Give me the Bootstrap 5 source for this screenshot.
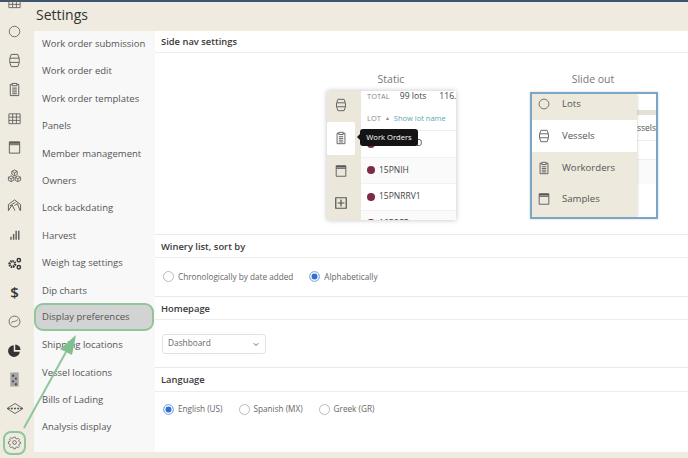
<!DOCTYPE html>
<html lang="en">
<head>
<meta charset="utf-8">
<title>Settings</title>
<link href="https://cdn.jsdelivr.net/npm/bootstrap@5.3.0/dist/css/bootstrap.min.css" rel="stylesheet">
<style>
html,body{height:458px;overflow:hidden}
body{font-family:"Open Sans","Liberation Sans",sans-serif;background:#efebe0;color:#555;font-size:9px;position:relative}
.topline{height:2px;background:#3d5570}
.shell{height:456px}
.rail{width:29px;flex:none;margin-top:-14px}
.rail-i{height:29px;flex:none;color:#5a5a5a}
.rail-i svg{width:15px;height:15px}
.rail-gap{margin-top:5px}
.rail-wide svg{width:18px;height:15px}
.dollar{font:600 15px "Open Sans",sans-serif;color:#333;line-height:1}
.main-col{padding-left:5px}
.title{font-size:14px;color:#333;height:29px;line-height:26px;padding-left:2px;margin-left:0}
.panel{height:421px;background:#fff;border-top-left-radius:3px;margin-left:0}
.sublist{width:121px;background:#f8f8f8;flex:none}
.sub-i{height:27.4px;line-height:26px;padding-left:8px;font-size:9.5px;color:#555;white-space:nowrap}
.sub-on{background:#d3d3d3;border:2px solid #8fc79a;border-radius:9px;padding-left:6px;line-height:23px;height:28px;margin-top:-1.6px;margin-bottom:1px;margin-right:1px}
.content{min-width:0}
.sec-h{font-size:9.4px;font-weight:600;color:#3a3a3a;height:23px;line-height:23px;padding-left:6px;border-bottom:1px solid #ececec}
.sec-first{height:22px;line-height:21px}
.sec-lang{height:24px}
.sec-b{border-bottom:1px solid #e9e9e9;padding-left:8px}
.s1{height:182px;position:relative}
.s2{height:39px}
.s3{height:48px}
.s4{height:43px;padding:11px 0 0 8px}
.opt{font-size:8.2px;color:#666;gap:4px}
.radio-o{width:11px;height:11px;border-radius:50%;border:1px solid #bbb;background:#fff;flex:none}
.radio-on{border:1.5px solid #9dbce8;background:#2f6fd6;box-shadow:inset 0 0 0 1.5px #fff}
.sel{width:104px;height:20px;margin-left:-1px;border:1px solid #e2e2e2;border-radius:3px;font-size:8.3px;color:#666;padding:0 6px 0 5px}
.sel svg{width:6px;height:6px}
.pv-t{font-size:10.5px;color:#777;position:absolute;top:19px;transform:translateX(-50%)}
.pv-t1{left:236px}
.pv-t2{left:438px}
.pv{position:absolute;overflow:hidden;background:#fff}
.pv-s{left:172px;top:38px;width:129px;height:129px;box-shadow:0 0 5px rgba(0,0,0,.25)}
.pv-r{width:34px;background:#ebe7db;flex:none}
.pv-ri{height:32.5px;width:28px;flex:none;color:#555}
.pv-ri svg{width:14px;height:14px}
.pv-ri-first{height:31px;padding-bottom:3px}
.pv-on{background:#fff;border-radius:2px}
.pv-top{font-size:8.6px;color:#444;padding:0 0 0 6px;white-space:nowrap}
.pv-tot{height:13px;line-height:11px}
.pv-lbl{font-size:7.5px;color:#888;margin-right:10px}
.pv-num{margin-right:13px}
.pv-lot{height:27px;font-size:7.5px;color:#888;border-bottom:1px solid #eee;padding-top:4px}
.pv-tri{font-size:5px;margin:0 4px}
.pv-lnk{color:#5ea6b8}
.pv-row{height:26.5px;font-size:8.5px;color:#444;padding-left:6px;border-bottom:1px solid #f2f2f2;white-space:nowrap;flex:none}
.pv-grey{background:#fafafa}
.dot{width:8px;height:8px;border-radius:50%;background:#7d2a45;margin-right:4px;flex:none}
.tip{position:absolute;left:33px;top:38px;height:17px;width:58px;background:#141414;color:#fff;font-size:7.6px;line-height:17px;text-align:center;border-radius:3px}
.tip::before{content:"";position:absolute;left:-3px;top:5px;border:3.5px solid transparent;border-left:0;border-right-color:#141414}
.pv-o{left:375px;top:39px;width:128px;height:127px;border:2px solid #7ba6c8;box-shadow:0 0 2px rgba(0,0,0,.2)}
.so-m{position:absolute;left:0;top:0;width:105px;height:123px;background:#ede9dd;box-shadow:1px 0 2px rgba(0,0,0,.12)}
.so-i{height:31.6px;font-size:9.6px;color:#555;padding-left:5px;flex:none}
.so-i svg{width:14px;height:14px;margin-right:11px;flex:none}
.so-first{height:26px;padding-bottom:6px}
.so-on{background:#fff;height:32px}
.so-bg{position:absolute;left:105px;top:0;right:0;bottom:0;font-size:8.5px;color:#555}
.so-band{height:21px;border-bottom:5px solid #e4e2d6}
.so-ssels{height:26px;line-height:25px;border-bottom:1px solid #eee;padding-right:1px}
.so-r3{height:19px;border-bottom:1px solid #eee}
.so-r4{height:24px;background:#fafafa}
.mark-ln{position:absolute;left:0;top:0;pointer-events:none}
.gear-ring{position:absolute;left:3px;top:431px;width:23px;height:24px;border:2px solid #8fc79a;border-radius:8px}
</style>
</head>
<body>
<svg width="0" height="0" class="d-block position-absolute">
<defs>
<symbol id="i-circle" viewBox="0 0 16 16"><circle cx="8" cy="8" r="5.6" fill="none" stroke="currentColor" stroke-width=".9"/></symbol>
<symbol id="i-barrel" viewBox="0 0 16 16"><path d="M4.500 1.500h7q1.700 3.500 1.700 6.500t-1.700 6.500h-7Q2.800 11 2.800 8t1.700-6.500zM3.200 5.500h9.600M3.200 10h9.600" fill="none" stroke="currentColor" stroke-width="1"/></symbol>
<symbol id="i-clip" viewBox="0 0 16 16"><path d="M5.500 2.500H3.500v12h9v-12h-2M5.500 1.500h5v2.500h-5zM5.500 6.500h5M5.500 8.500h5M5.500 10.500h5M5.500 12.500h5" fill="none" stroke="currentColor" stroke-width="1"/></symbol>
<symbol id="i-grid" viewBox="0 0 16 16"><path d="M2 3h12v10.500H2zM2 6.500h12M2 10h12M6 3v10.500M10 3v10.500" fill="none" stroke="currentColor" stroke-width=".9"/></symbol>
<symbol id="i-box" viewBox="0 0 16 16"><path d="M2.500 2h11v12h-11zM2.500 5h11" fill="none" stroke="currentColor" stroke-width="1"/><path d="M2.500 2h11v2h-11z" fill="currentColor"/></symbol>
<symbol id="i-cubes" viewBox="0 0 16 16"><path d="M8 1l2.900 1.500v3.200L8 7.200 5.100 5.700V2.500zM4.400 7.300l2.900 1.500V12l-2.900 1.500L1.500 12V8.800zM11.600 7.300l2.900 1.500V12l-2.900 1.500L8.700 12V8.800zM5.100 2.500L8 4l2.900-1.500M8 4v3M1.500 8.800l2.900 1.500 2.900-1.500M4.400 10.300v3M8.700 8.800l2.900 1.500 2.900-1.500M11.600 10.300v3" fill="none" stroke="currentColor" stroke-width=".9"/></symbol>
<symbol id="i-barn" viewBox="0 0 16 16"><path d="M1.500 13.500V7L8 2l6.500 5v6.500M1.500 13.500l4-6 3 6M8 8l3-2 3 7.500M3 8.500l6-4" fill="none" stroke="currentColor" stroke-width="1"/></symbol>
<symbol id="i-bars" viewBox="0 0 16 16"><path d="M3.500 10.500h1.500v3H3.500zM6.300 7.500h1.500v6H6.300zM9 4h1.500v9.500H9zM11.800 4h1.500v9.500h-1.500z" fill="currentColor"/></symbol>
<symbol id="i-gears" viewBox="0 0 16 16"><circle cx="5.700" cy="8.500" r="3" fill="none" stroke="#333" stroke-width="2.600" stroke-dasharray="1.600 .7"/><circle cx="12.600" cy="4.500" r="1.800" fill="none" stroke="#333" stroke-width="1.500"/><circle cx="12.600" cy="12" r="1.800" fill="none" stroke="#333" stroke-width="1.500"/></symbol>
<symbol id="i-gauge" viewBox="0 0 16 16"><circle cx="8" cy="8" r="5.800" fill="none" stroke="currentColor" stroke-width=".9"/><path d="M4.500 10C6 6.500 8 9.500 11.500 6" fill="none" stroke="currentColor" stroke-width=".9"/></symbol>
<symbol id="i-pie" viewBox="0 0 16 16"><path d="M7.200 2.300a6.300 6.300 0 1 0 6.500 7H7.200z" fill="#333"/><path d="M8.800 1.500a6 6 0 0 1 5.700 6H8.800z" fill="#333"/></symbol>
<symbol id="i-card" viewBox="0 0 16 16"><path d="M3.500 .5h9v15h-9z" fill="#a5a5a5"/><path d="M5.500 3h2v2h-2zM8.500 6h2v2h-2zM5.500 9h2v2h-2zM8.500 12h2v2h-2z" fill="#444"/></symbol>
<symbol id="i-diamond" viewBox="0 0 18 15"><path d="M9 2.500L17 7.500 9 12.500 1 7.500zM1 7.500h3M14 7.500h3" fill="none" stroke="currentColor" stroke-width=".9"/><path d="M4.500 7.500l1.300-1.200 1.300 1.200-1.300 1.200zM7.700 7.500L9 6.300l1.300 1.200L9 8.700zM10.900 7.500l1.300-1.200 1.300 1.200-1.300 1.200z" fill="currentColor"/></symbol>
<symbol id="i-gear" viewBox="0 0 16 16"><circle cx="8" cy="8" r="2" fill="none" stroke="currentColor" stroke-width=".9"/><path d="M7 2.300h2l.4 1.500 1.200.5 1.300-.8 1.400 1.400-.8 1.300.5 1.200 1.500.4v1.400l-1.500.4-.5 1.200.8 1.300-1.400 1.400-1.300-.8-1.200.5-.4 1.500H7l-.4-1.500-1.200-.5-1.300.8-1.400-1.400.8-1.300-.5-1.200-1.500-.4V7.200l1.500-.4.500-1.200-.8-1.300 1.400-1.400 1.300.8 1.200-.5z" fill="none" stroke="currentColor" stroke-width=".8"/></symbol>
<symbol id="i-plus" viewBox="0 0 16 16"><path d="M2 2h12v12H2zM8 4v8M4 8h8" fill="none" stroke="currentColor" stroke-width="1.400"/></symbol>
</defs>
</svg>
<div class="topline"></div>
<div class="shell d-flex">
  <nav class="rail d-flex flex-column align-items-center">
    <div class="rail-i d-flex align-items-center justify-content-center"><svg><use href="#i-grid"/></svg></div>
    <div class="rail-i d-flex align-items-center justify-content-center"><svg><use href="#i-circle"/></svg></div>
    <div class="rail-i d-flex align-items-center justify-content-center"><svg><use href="#i-barrel"/></svg></div>
    <div class="rail-i d-flex align-items-center justify-content-center"><svg><use href="#i-clip"/></svg></div>
    <div class="rail-i d-flex align-items-center justify-content-center"><svg><use href="#i-grid"/></svg></div>
    <div class="rail-i d-flex align-items-center justify-content-center"><svg><use href="#i-box"/></svg></div>
    <div class="rail-i d-flex align-items-center justify-content-center"><svg><use href="#i-cubes"/></svg></div>
    <div class="rail-i d-flex align-items-center justify-content-center"><svg><use href="#i-barn"/></svg></div>
    <div class="rail-i d-flex align-items-center justify-content-center"><svg><use href="#i-bars"/></svg></div>
    <div class="rail-i d-flex align-items-center justify-content-center"><svg><use href="#i-gears"/></svg></div>
    <div class="rail-i d-flex align-items-center justify-content-center"><span class="dollar">$</span></div>
    <div class="rail-i d-flex align-items-center justify-content-center"><svg><use href="#i-gauge"/></svg></div>
    <div class="rail-i d-flex align-items-center justify-content-center"><svg><use href="#i-pie"/></svg></div>
    <div class="rail-i d-flex align-items-center justify-content-center"><svg><use href="#i-card"/></svg></div>
    <div class="rail-i rail-wide d-flex align-items-center justify-content-center"><svg><use href="#i-diamond"/></svg></div>
    <div class="rail-i rail-gap d-flex align-items-center justify-content-center"><svg><use href="#i-gear"/></svg></div>
  </nav>
  <div class="main-col flex-grow-1">
    <div class="title">Settings</div>
    <div class="panel d-flex">
      <div class="sublist">
        <div class="sub-i">Work order submission</div>
        <div class="sub-i">Work order edit</div>
        <div class="sub-i">Work order templates</div>
        <div class="sub-i">Panels</div>
        <div class="sub-i">Member management</div>
        <div class="sub-i">Owners</div>
        <div class="sub-i">Lock backdating</div>
        <div class="sub-i">Harvest</div>
        <div class="sub-i">Weigh tag settings</div>
        <div class="sub-i">Dip charts</div>
        <div class="sub-i sub-on">Display preferences</div>
        <div class="sub-i">Shipping locations</div>
        <div class="sub-i">Vessel locations</div>
        <div class="sub-i">Bills of Lading</div>
        <div class="sub-i">Analysis display</div>
      </div>
      <div class="content flex-grow-1">
        <div class="sec-h sec-first">Side nav settings</div>
        <div class="sec-b s1">
          <div class="pv-t pv-t1">Static</div>
          <div class="pv pv-s d-flex">
            <div class="pv-r d-flex flex-column">
              <div class="pv-ri pv-ri-first d-flex align-items-center justify-content-center"><svg><use href="#i-barrel"/></svg></div>
              <div class="pv-ri pv-on d-flex align-items-center justify-content-center"><svg><use href="#i-clip"/></svg></div>
              <div class="pv-ri d-flex align-items-center justify-content-center"><svg><use href="#i-box"/></svg></div>
              <div class="pv-ri d-flex align-items-center justify-content-center"><svg><use href="#i-plus"/></svg></div>
            </div>
            <div class="flex-grow-1 overflow-hidden">
              <div class="pv-top pv-tot d-flex align-items-start"><span class="pv-lbl">TOTAL</span><span class="pv-num">99 lots</span><span>116.</span></div>
              <div class="pv-top pv-lot d-flex align-items-center">LOT <span class="pv-tri">▲</span> <span class="pv-lnk">Show lot name</span></div>
              <div class="pv-row d-flex align-items-center"><span class="dot"></span>15PCHARD</div>
              <div class="pv-row pv-grey d-flex align-items-center"><span class="dot"></span>15PNIH</div>
              <div class="pv-row d-flex align-items-center"><span class="dot"></span>15PNRRV1</div>
              <div class="pv-row pv-grey d-flex align-items-center"><span class="dot"></span>16PSCF</div>
            </div>
            <div class="tip">Work Orders</div>
          </div>
          <div class="pv-t pv-t2">Slide out</div>
          <div class="pv pv-o">
            <div class="so-bg">
              <div class="so-band"></div>
              <div class="so-ssels text-end">ssels</div>
              <div class="so-r3"></div>
              <div class="so-r4"></div>
            </div>
            <div class="so-m d-flex flex-column">
              <div class="so-i so-first d-flex align-items-center"><svg><use href="#i-circle"/></svg>Lots</div>
              <div class="so-i so-on d-flex align-items-center"><svg><use href="#i-barrel"/></svg>Vessels</div>
              <div class="so-i d-flex align-items-center"><svg><use href="#i-clip"/></svg>Workorders</div>
              <div class="so-i d-flex align-items-center"><svg><use href="#i-box"/></svg>Samples</div>
            </div>
          </div>
        </div>
        <div class="sec-h">Winery list, sort by</div>
        <div class="sec-b s2 d-flex align-items-center gap-3">
          <div class="opt d-flex align-items-center"><span class="radio-o"></span>Chronologically by date added</div>
          <div class="opt d-flex align-items-center"><span class="radio-o radio-on"></span>Alphabetically</div>
        </div>
        <div class="sec-h">Homepage</div>
        <div class="sec-b s3 d-flex align-items-center">
          <div class="sel d-flex align-items-center justify-content-between">Dashboard<svg viewBox="0 0 8 8"><path d="M1 3l3 3 3-3" fill="none" stroke="#555" stroke-width="1.200"/></svg></div>
        </div>
        <div class="sec-h sec-lang">Language</div>
        <div class="s4 d-flex align-items-start gap-3">
          <div class="opt d-flex align-items-center"><span class="radio-o radio-on"></span>English (US)</div>
          <div class="opt d-flex align-items-center"><span class="radio-o"></span>Spanish (MX)</div>
          <div class="opt d-flex align-items-center"><span class="radio-o"></span>Greek (GR)</div>
        </div>
      </div>
    </div>
  </div>
</div>
<div class="gear-ring"></div>
<svg class="mark-ln" width="688" height="458" viewBox="0 0 688 458">
  <path d="M24 428L66 352" stroke="#8fc79a" stroke-width="2" fill="none"/>
  <path d="M76 335L60 349L72 355z" fill="#7fc08f"/>
</svg>
</body>
</html>
